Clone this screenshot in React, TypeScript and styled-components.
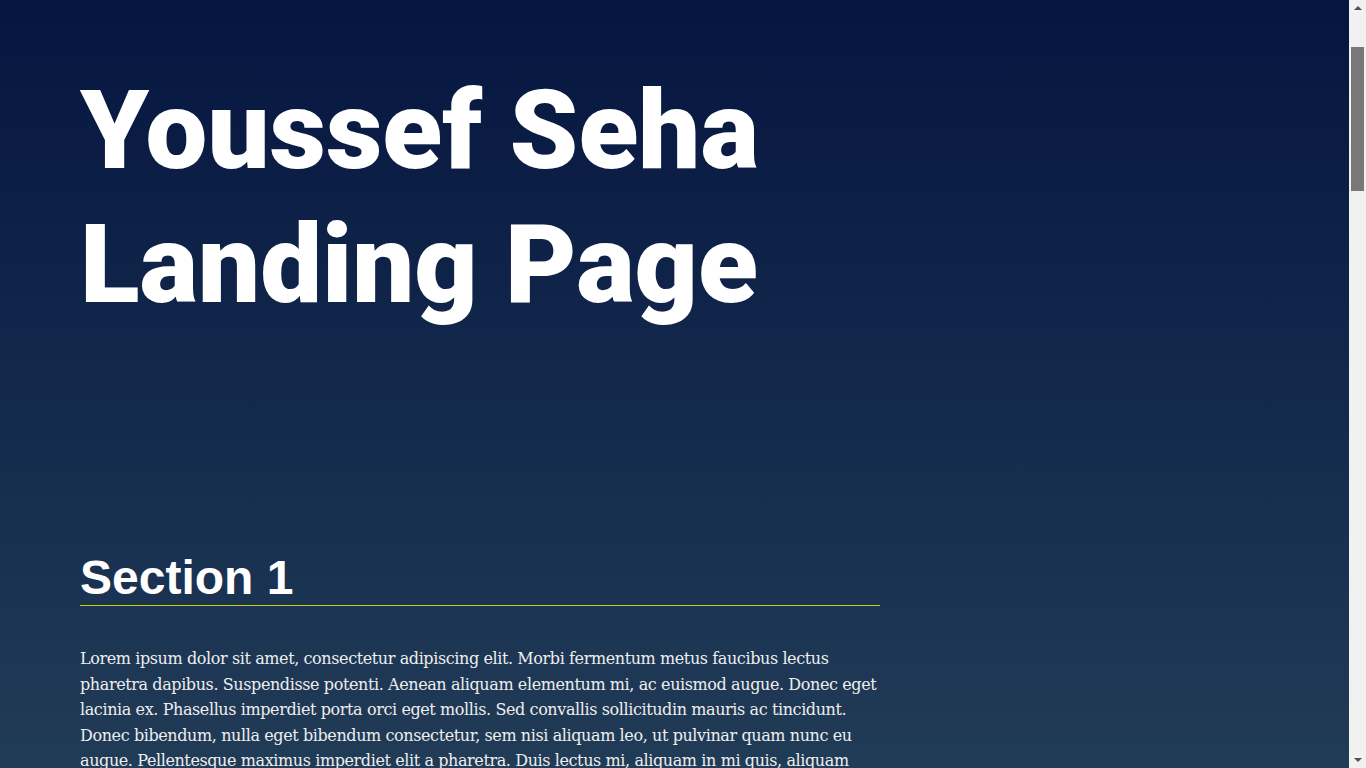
import React from "react";
import styled, { createGlobalStyle } from "styled-components";

const GlobalStyle = createGlobalStyle`
  html, body {
    margin: 0;
    padding: 0;
  }
  body {
    background: rgb(136, 203, 171);
    color: #fff;
    font-family: "DejaVu Serif", serif;
  }
`;

const Page = styled.div`
  background: linear-gradient(180deg, rgb(5, 21, 64) 0px, rgb(136, 203, 171) 3600px);
  padding: 64px 0 80px;
`;

const Hero = styled.header`
  padding: 0 80px;
  min-height: 486px;
`;

const Title = styled.h1`
  margin: 0;
  font-family: Roboto, "Noto Sans", sans-serif;
  font-weight: 900;
  font-size: 110px;
  line-height: 134.4px;
  color: #fff;
`;

const Section = styled.section`
  min-height: 85vh;
  padding: 0 80px;
`;

const Container = styled.div`
  max-width: 800px;
`;

const SectionTitle = styled.h2`
  margin: 0 0 40px;
  font-family: "Liberation Sans", Arial, sans-serif;
  font-size: 48px;
  font-weight: 700;
  line-height: 55px;
  color: #fff;
  border-bottom: 1px solid #cc1;
`;

const Text = styled.p`
  margin: 0 0 16px;
  font-family: "DejaVu Serif", serif;
  font-size: 16px;
  line-height: 25.6px;
  letter-spacing: -0.4px;
  color: #eee;
`;

/* Window scrollbar, drawn over the right edge of the page */
const ScrollRail = styled.div`
  position: fixed;
  top: 0;
  right: 0;
  width: 17px;
  height: 100vh;
  background: #f1f1f1;
  display: flex;
  flex-direction: column;
  z-index: 10;
`;

const ScrollButton = styled.div<{ $dir: "up" | "down" }>`
  flex: 0 0 17px;
  display: flex;
  align-items: center;
  justify-content: center;

  &::before {
    content: "";
    width: 0;
    height: 0;
    border-left: 4px solid transparent;
    border-right: 4px solid transparent;
    ${(p) =>
      p.$dir === "up"
        ? "border-bottom: 4px solid #505050; margin-top: -1px;"
        : "border-top: 4px solid #505050; margin-top: 1px;"}
  }
`;

const ScrollTrack = styled.div`
  flex: 1;
  padding: 30px 2px 0;
`;

const ScrollThumb = styled.div`
  height: 144px;
  background: #787878;
`;

const P1_LINES = [
  "Lorem ipsum dolor sit amet, consectetur adipiscing elit. Morbi fermentum metus faucibus lectus",
  "pharetra dapibus. Suspendisse potenti. Aenean aliquam elementum mi, ac euismod augue. Donec eget",
  "lacinia ex. Phasellus imperdiet porta orci eget mollis. Sed convallis sollicitudin mauris ac tincidunt.",
  "Donec bibendum, nulla eget bibendum consectetur, sem nisi aliquam leo, ut pulvinar quam nunc eu",
  "augue. Pellentesque maximus imperdiet elit a pharetra. Duis lectus mi, aliquam in mi quis, aliquam",
  "porttitor lacus. Morbi a tincidunt felis. Sed leo nunc, pharetra et elementum non, faucibus vitae elit. Integer nec libero venenatis libero ultricies molestie semper in tellus. Sed congue et odio sed euismod.",
];

const P2 =
  "Aliquam a convallis justo. Vivamus venenatis, erat eget pulvinar gravida, ipsum lacus aliquet velit, vel luctus diam ipsum a diam. Cras eu tincidunt arcu, vitae rhoncus purus. Vestibulum fermentum consectetur porttitor. Suspendisse imperdiet porttitor tortor, eget elementum tortor mollis non.";

const sections = ["Section 1", "Section 2", "Section 3", "Section 4", "Section 5"];

export default function App() {
  return (
    <>
      <GlobalStyle />
      <Page>
        <Hero>
          <Title>
            Youssef Seha
            <br />
            Landing Page
          </Title>
        </Hero>
        <main>
          {sections.map((name) => (
            <Section key={name} id={name.replace(" ", "").toLowerCase()}>
              <Container>
                <SectionTitle>{name}</SectionTitle>
                <Text>
                  {P1_LINES.map((line, i) => (
                    <React.Fragment key={i}>
                      {line}
                      {i < P1_LINES.length - 1 && <br />}
                    </React.Fragment>
                  ))}
                </Text>
                <Text>{P2}</Text>
              </Container>
            </Section>
          ))}
        </main>
      </Page>
      <ScrollRail aria-hidden="true">
        <ScrollButton $dir="up" />
        <ScrollTrack>
          <ScrollThumb />
        </ScrollTrack>
        <ScrollButton $dir="down" />
      </ScrollRail>
    </>
  );
}
